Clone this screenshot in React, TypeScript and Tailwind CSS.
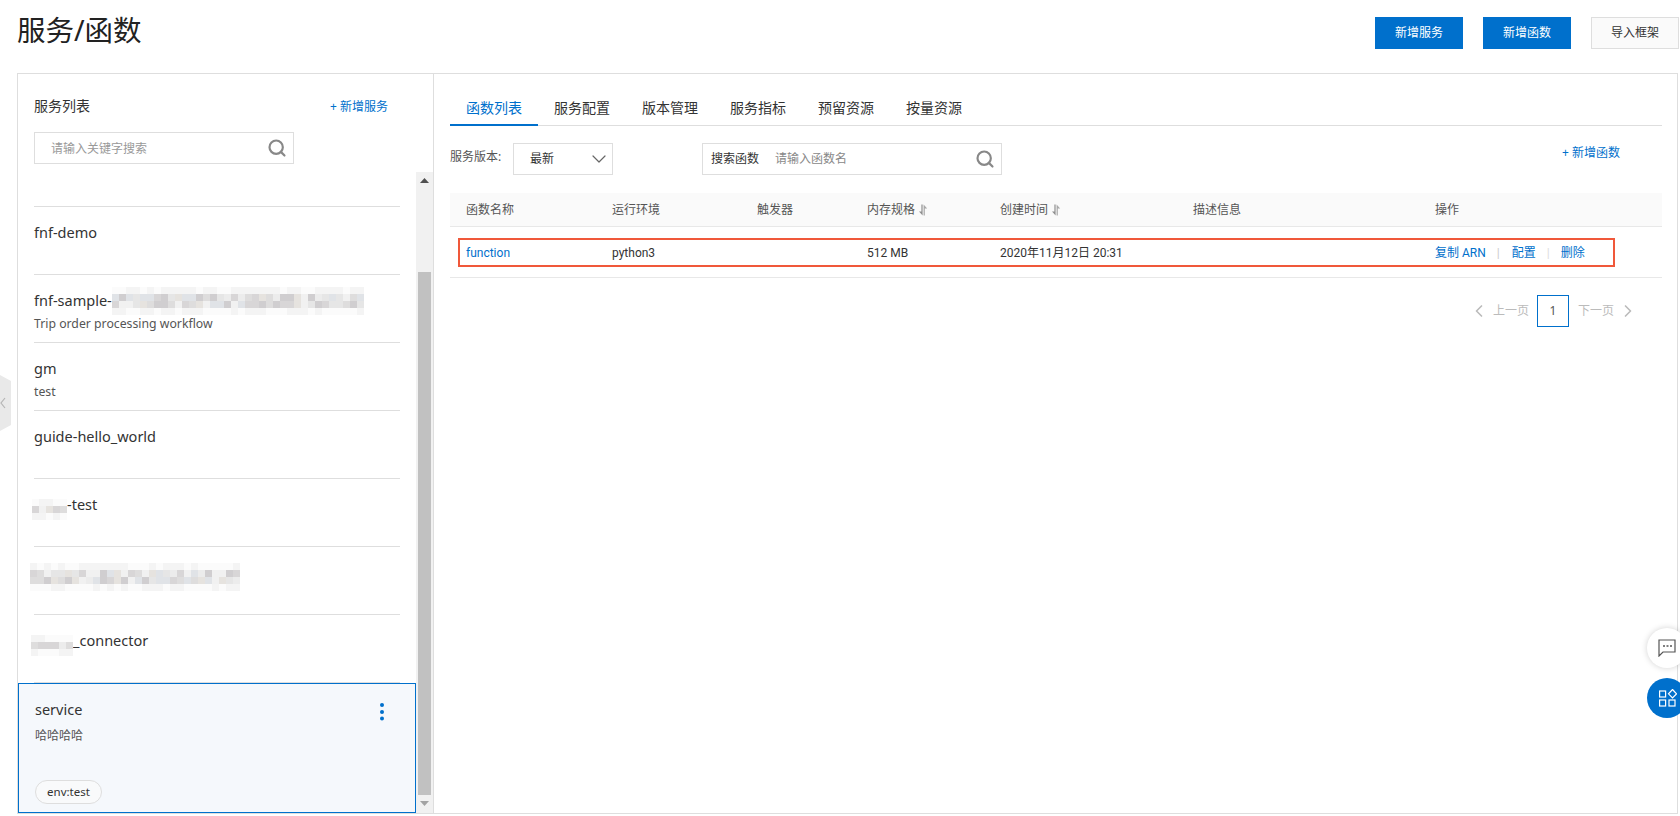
import React from "react";
import { Search, ChevronDown, ChevronLeft, ChevronRight } from "lucide-react";

const CELLS = ["#f1f1f1", "#ececec", "#e6e6e6", "#dedddd", "#d8d6d7", "#d0ced0", "#e0e3e7", "#e6e3df"];

function Mosaic({ w, rows, seed, cell = 7 }: { w: number; rows: number; seed: number; cell?: number }) {
  const cols = Math.round(w / cell);
  const out: React.ReactNode[] = [];
  let s = seed;
  for (let r = 0; r < rows; r++) {
    const edge = r === 0 || r === rows - 1;
    for (let c = 0; c < cols; c++) {
      s = (s * 9301 + 49297) % 233280;
      const i = Math.floor((s / 233280) * CELLS.length);
      out.push(<span key={`${r}-${c}`} style={{ background: edge ? (i % 2 ? "#fbfbfb" : "#f4f4f4") : CELLS[i] }} />);
    }
  }
  return (
    <span
      className="inline-grid shrink-0 blur-[0.6px]"
      style={{ gridTemplateColumns: `repeat(${cols}, ${cell}px)`, gridAutoRows: `${cell}px` }}
    >
      {out}
    </span>
  );
}

function SortIcon() {
  return (
    <svg width="10" height="12" viewBox="0 0 10 12" className="ml-[3px]" fill="#8f8f8f">
      <path d="M3.4 0.5H4.6V11.5L1 7.5H3.4Z" />
      <path d="M5.6 11.5H6.8V4.5H9.2L5.6 0.5Z" fill="#a8a8a8" />
    </svg>
  );
}

function Row({ name, desc }: { name: React.ReactNode; desc?: string }) {
  return (
    <div className="mx-4 h-[68px] border-t border-[#dedede] pt-4">
      <div className="flex h-5 items-center text-[14.5px] text-[#333]">{name}</div>
      {desc && <div className="mt-[5px] h-4 text-[12.25px] leading-4 text-[#555]">{desc}</div>}
    </div>
  );
}

const grid = "grid grid-cols-[146px_145px_110px_133px_193px_242px_1fr] items-center";

export default function App() {
  return (
    <div className="relative h-[816px] w-[1680px] overflow-hidden bg-white font-['Noto_Sans','Noto_Sans_CJK_SC',sans-serif] text-xs text-[#333]">
      <header className="flex h-[73px] items-start justify-between pl-[17px] pr-px">
        <h1 className="mt-[9px] text-[28.5px] leading-[42px] font-normal text-[#222]">服务/函数</h1>
        <div className="mt-[17px] flex gap-5">
          <button className="h-8 w-[88px] bg-[#0070cc] text-xs text-white">新增服务</button>
          <button className="h-8 w-[88px] bg-[#0070cc] text-xs text-white">新增函数</button>
          <button className="h-8 w-[88px] border border-[#dedede] bg-[#fafafa] text-xs text-[#333]">导入框架</button>
        </div>
      </header>

      <main className="ml-[17px] mr-[2px] flex h-[741px] border border-[#dedede]">
        <aside className="flex w-[416px] shrink-0 flex-col border-r border-[#dedede]">
          <div className="h-[98px] shrink-0 pl-4 pr-[45px] pt-[22px]">
            <div className="flex h-5 items-center justify-between">
              <span className="text-sm">服务列表</span>
              <span className="mt-[2px] text-xs text-[#0070cc]">+ 新增服务</span>
            </div>
            <div className="mt-[16px] flex h-8 w-[260px] items-center justify-between border border-[#dedede] pl-4 pr-[6px] text-xs text-[#999]">
              <span className="mt-[2px]">请输入关键字搜索</span>
              <Search size={20} strokeWidth={2.6} color="#888" />
            </div>
          </div>
          <div className="flex min-h-0 flex-1">
            <div className="w-[398px] shrink-0 overflow-hidden">
              <div className="h-[34px]" />
              <Row name="fnf-demo" />
              <Row
                name={
                  <>
                    fnf-sample-
                    <Mosaic w={252} rows={4} seed={11} />
                  </>
                }
                desc="Trip order processing workflow"
              />
              <Row name="gm" desc="test" />
              <Row name="guide-hello_world" />
              <Row
                name={
                  <>
                    <span className="-ml-[2px]">
                      <Mosaic w={33} rows={3} seed={7} />
                    </span>
                    -test
                  </>
                }
              />
              <Row
                name={
                  <span className="-ml-1">
                    <Mosaic w={210} rows={4} seed={29} />
                  </span>
                }
              />
              <Row
                name={
                  <>
                    <span className="-ml-[3px]">
                      <Mosaic w={42} rows={3} seed={53} />
                    </span>
                    _connector
                  </>
                }
              />
              <div className="mx-4 h-px bg-[#dedede]" />
              <div className="h-[130px] border border-[#0070cc] bg-[#f5f8fc] pl-4 pr-[31px] pt-4">
                <div className="flex h-5 items-center justify-between">
                  <span className="text-[14.5px]">service</span>
                  <svg width="4" height="18" viewBox="0 0 4 18" fill="#0070cc" className="mt-1">
                    <circle cx="2" cy="2" r="2" />
                    <circle cx="2" cy="9" r="2" />
                    <circle cx="2" cy="15.5" r="2" />
                  </svg>
                </div>
                <div className="mt-[8px] h-4 text-xs leading-4 text-[#555]">哈哈哈哈</div>
                <div className="mt-[36px] flex h-6 w-[67px] items-center justify-center rounded-full border border-[#dedede] bg-[#f9fafb] text-[11.5px]">
                  env:test
                </div>
              </div>
            </div>
            <div className="flex w-[17px] shrink-0 flex-col items-center bg-[#f1f1f1]">
              <svg width="9" height="5" viewBox="0 0 9 5" className="mt-[6px]" fill="#505050">
                <path d="M4.5 0L9 5H0Z" />
              </svg>
              <div className="mt-[89px] h-[523px] w-[13px] bg-[#c1c1c1]" />
              <svg width="9" height="5" viewBox="0 0 9 5" className="mt-[6px]" fill="#a3a3a3">
                <path d="M4.5 5L9 0H0Z" />
              </svg>
            </div>
          </div>
        </aside>

        <section className="min-w-0 flex-1 pl-4 pr-[15px] pt-[17px]">
          <nav className="flex h-[35px] border-b border-[#dedede]">
            {["函数列表", "服务配置", "版本管理", "服务指标", "预留资源", "按量资源"].map((t, i) => (
              <div
                key={t}
                className={
                  i === 0
                    ? "-mb-px flex h-[35px] w-[88px] items-center justify-center border-b-2 border-[#0070cc] text-sm text-[#0070cc]"
                    : "flex h-[34px] w-[88px] items-center justify-center text-sm text-[#333]"
                }
              >
                {t}
              </div>
            ))}
          </nav>

          <div className="mt-[17px] flex h-8 items-center">
            <span className="-mt-[5px] w-[63px] text-xs text-[#555]">服务版本:</span>
            <div className="flex h-8 w-[100px] items-center justify-between border border-[#dedede] pl-4 pr-px text-xs">
              <span>最新</span>
              <ChevronDown size={24} strokeWidth={1.2} color="#666" />
            </div>
            <div className="ml-[89px] flex h-8 w-[300px] items-center border border-[#dedede] pl-2 pr-[6px] text-xs">
              <span>搜索函数</span>
              <span className="ml-[16px] flex-1 text-[#888]">请输入函数名</span>
              <Search size={20} strokeWidth={2.6} color="#888" />
            </div>
            <span className="-mt-[13px] ml-auto mr-[42px] text-xs text-[#0070cc]">+ 新增函数</span>
          </div>

          <div className={`${grid} mt-[18px] h-[34px] border-b border-[#e8e8e8] bg-[#fafafa] pl-[16px] text-xs text-[#555]`}>
            <span>函数名称</span>
            <span>运行环境</span>
            <span>触发器</span>
            <span className="flex items-center">
              内存规格
              <SortIcon />
            </span>
            <span className="flex items-center">
              创建时间
              <SortIcon />
            </span>
            <span>描述信息</span>
            <span>操作</span>
          </div>

          <div className="h-[51px] border-b border-[#e8e8e8] pl-2 pt-[11px]">
            <div className={`${grid} h-[29px] w-[1157px] border-2 border-[#f0583a] pl-[6px] font-['Roboto','Noto_Sans_CJK_SC',sans-serif]`}>
              <span className="text-[#0070cc]">function</span>
              <span>python3</span>
              <span />
              <span>512 MB</span>
              <span>2020年11月12日 20:31</span>
              <span />
              <span className="flex items-center whitespace-nowrap text-[#0070cc]">
                复制 ARN
                <span className="ml-[11px] mr-[12px] text-[#ccc]">|</span>
                配置
                <span className="ml-[11px] mr-[11px] text-[#ddd]">|</span>
                删除
              </span>
            </div>
          </div>

          <div className="mt-[17px] flex h-8 items-center justify-end pr-[24px] text-xs text-[#bbb]">
            <ChevronLeft size={20} strokeWidth={2} color="#bbb" />
            <span className="ml-[4px]">上一页</span>
            <span className="ml-[8px] flex h-8 w-8 items-center justify-center border border-[#0070cc] text-[#555]">1</span>
            <span className="ml-[9px]">下一页</span>
            <ChevronRight size={20} strokeWidth={2} color="#bbb" className="ml-[4px]" />
          </div>
        </section>
      </main>

      <svg width="11" height="56" viewBox="0 0 11 56" className="absolute left-0 top-[375px]">
        <path d="M0 0L11 6V50L0 56Z" fill="#e9e9e9" />
        <path d="M5 23L1 28L5 33" fill="none" stroke="#b5b5b5" strokeWidth="1.2" />
      </svg>

      <div className="absolute left-[1647px] top-[628px] flex h-10 w-10 items-center rounded-full bg-white pl-[11px] shadow-[0_0_6px_rgba(0,0,0,0.18)]">
        <svg width="18" height="18" viewBox="0 0 18 18" fill="none">
          <path d="M1 1H17V13H5L1 17Z" stroke="#555" strokeWidth="1.2" />
          <path d="M5 7H7M8.5 7H10.5M12 7H14" stroke="#555" strokeWidth="1.6" />
        </svg>
      </div>
      <div className="absolute left-[1647px] top-[678px] flex h-10 w-10 items-center rounded-full bg-[#0070cc] pl-[12px]">
        <svg width="18" height="18" viewBox="0 0 18 18" fill="none" stroke="#fff" strokeWidth="1.2">
          <rect x="0.6" y="2" width="6" height="6" />
          <path d="M13.5 0.5L17.5 4.8L13.5 9L9.5 4.8Z" />
          <rect x="0.6" y="11" width="6" height="6" />
          <rect x="10" y="11" width="6" height="6" />
        </svg>
      </div>
    </div>
  );
}
